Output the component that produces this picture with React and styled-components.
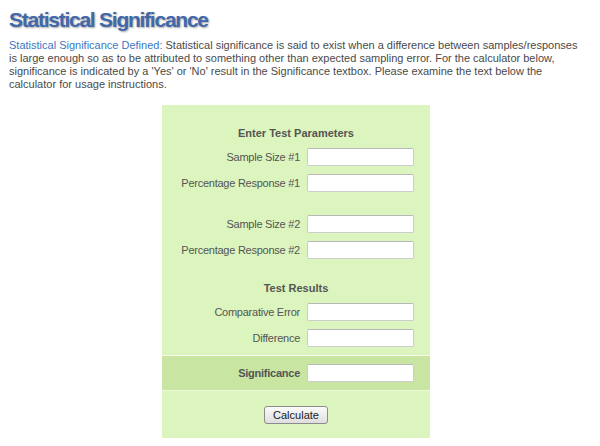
import React from "react";
import styled, { createGlobalStyle } from "styled-components";

const Global = createGlobalStyle`
  html, body { margin: 0; padding: 0; background: #fff; }
  body { padding: 8px; font-family: "Liberation Sans", Arial, sans-serif; }
`;

const Page = styled.div`
  width: 584px;
`;

const Title = styled.h1`
  margin: 0 0 0 1px;
  font-family: "Liberation Sans", Arial, sans-serif;
  font-size: 21px;
  line-height: 24px;
  font-weight: bold;
  color: #4068aa;
  letter-spacing: -1.25px;
  text-shadow: 1px 1px 2px rgba(0, 0, 0, 0.35);
`;

const Intro = styled.p`
  margin: 7px 0 0 1px;
  width: 576px;
  font-size: 11px;
  line-height: 13px;
  color: #4a4a4a;
`;

const Term = styled.span`
  color: #3b78c4;
`;

const Panel = styled.div`
  margin: 14px 0 0 154px;
  width: 268px;
  background: #dcf4bd;
  padding-top: 21px;
  display: flex;
  flex-direction: column;
`;

const Heading = styled.div`
  margin-top: ${(p) => p.$top || 0}px;
  font-size: 11px;
  line-height: 14px;
  font-weight: bold;
  color: #555;
  text-align: center;
`;

const Fields = styled.div`
  margin-top: ${(p) => p.$top || 0}px;
  display: flex;
  flex-direction: column;
  gap: 8px;
`;

const Row = styled.div`
  display: grid;
  grid-template-columns: 145px 107px;
  align-items: center;
`;

const Label = styled.label`
  padding-right: 7px;
  text-align: right;
  font-size: 11px;
  line-height: 13px;
  letter-spacing: -0.25px;
  color: #555;
  font-weight: ${(p) => (p.$strong ? "bold" : "normal")};
`;

const Input = styled.input`
  box-sizing: border-box;
  width: 107px;
  height: 18px;
  margin: 0;
  padding: 1px 3px;
  background: #fff;
  border: 1px solid #cdcdcd;
  border-top-color: #b9b9b9;
  border-radius: 2px;
  font-size: 11px;
  font-family: inherit;
`;

const Band = styled.div`
  margin-top: 8px;
  background: #c8e6a2;
  border-top: 1px solid #f4fbec;
  border-bottom: 1px solid #eaf7da;
  padding: 8px 0;
`;

const ButtonBar = styled.div`
  display: flex;
  justify-content: center;
  padding: 15px 0 14px;
`;

const Button = styled.button`
  box-sizing: border-box;
  width: 64px;
  height: 18px;
  margin: 0;
  padding: 0;
  border: 1px solid #8c8c8c;
  border-radius: 3px;
  background: linear-gradient(#fbfbfb, #dedede);
  font-family: inherit;
  font-size: 11px;
  line-height: 16px;
  color: #222;
`;

const Field = ({ label, strong }) => (
  <Row>
    <Label $strong={strong}>{label}</Label>
    <Input type="text" />
  </Row>
);

export default function App() {
  return (
    <Page>
      <Global />
      <Title>Statistical Significance</Title>
      <Intro>
        <Term>Statistical Significance Defined:</Term> Statistical significance is said to exist when a
        difference between samples/responses is large enough so as to be attributed to something other
        than expected sampling error. For the calculator below, significance is indicated by a 'Yes' or
        'No' result in the Significance textbox. Please examine the text below the calculator for usage
        instructions.
      </Intro>
      <Panel>
        <Heading>Enter Test Parameters</Heading>
        <Fields $top={8}>
          <Field label="Sample Size #1" />
          <Field label="Percentage Response #1" />
        </Fields>
        <Fields $top={23}>
          <Field label="Sample Size #2" />
          <Field label="Percentage Response #2" />
        </Fields>
        <Heading $top={22}>Test Results</Heading>
        <Fields $top={8}>
          <Field label="Comparative Error" />
          <Field label="Difference" />
        </Fields>
        <Band>
          <Field label="Significance" strong />
        </Band>
        <ButtonBar>
          <Button type="button">Calculate</Button>
        </ButtonBar>
      </Panel>
    </Page>
  );
}
